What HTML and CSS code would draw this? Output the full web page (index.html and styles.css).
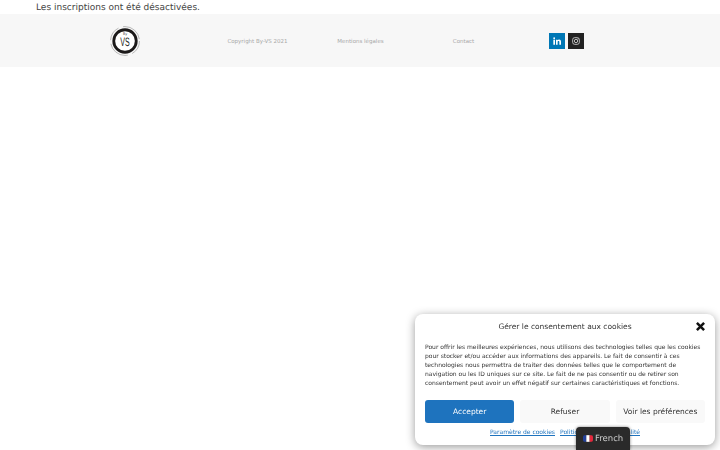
FILE: index.html
```html
<!DOCTYPE html>
<html lang="fr">
<head>
  <meta charset="UTF-8">
  <meta name="viewport" content="width=device-width, initial-scale=1.0">
  <title>By-VS</title>
  <link rel="stylesheet" href="styles.css">
</head>
<body>
  <p class="notice">Les inscriptions ont été désactivées.</p>

  <!-- Footer -->
  <footer class="footer">
    <div class="footer-logo">
      <svg width="30" height="30" viewBox="0 0 32 32">
        <circle cx="16" cy="16" r="15.4" fill="none" stroke="#8a8a8a" stroke-width="0.6" stroke-dasharray="16 5 24 4"/>
        <circle cx="16" cy="16" r="12" fill="#fff" stroke="#1c1a1a" stroke-width="3"/>
        <text class="logo-by" x="16" y="10" text-anchor="middle">By</text>
        <text class="logo-vs" x="16" y="21.5" text-anchor="middle" textLength="10" lengthAdjust="spacingAndGlyphs">VS</text>
      </svg>
    </div>
    <a class="footer-link" href="#">Copyright By-VS 2021</a>
    <a class="footer-link" href="#">Mentions légales</a>
    <a class="footer-link" href="#">Contact</a>
    <div class="social">
      <a class="social-btn linkedin" href="#">
        <svg width="8" height="8" viewBox="0 0 24 24" fill="#fff">
          <path d="M1 8h5v15H1zM3.500 1a2.700 2.700 0 1 1 0 5.400 2.700 2.700 0 0 1 0-5.400zM9 8h4.700v2.100c.8-1.400 2.400-2.500 4.700-2.500 4.400 0 5.600 2.800 5.600 7V23h-5v-7.400c0-2-.4-3.600-2.400-3.600-2.200 0-2.700 1.600-2.700 3.500V23H9z"/>
        </svg>
      </a>
      <a class="social-btn instagram" href="#">
        <svg width="8" height="8" viewBox="0 0 24 24" fill="none" stroke="#ddd" stroke-width="2.400">
          <rect x="2" y="2" width="20" height="20" rx="6"/>
          <circle cx="12" cy="12" r="5"/>
          <circle cx="18" cy="6" r="0.6"/>
        </svg>
      </a>
    </div>
  </footer>

  <!-- Cookie banner -->
  <div class="cookie-box">
    <div class="cookie-head">
      <span>Gérer le consentement aux cookies</span>
      <svg class="cookie-close" width="9" height="9" viewBox="0 0 10 10" stroke="#111" stroke-width="2.800">
        <path d="M1 1l8 8M9 1l-8 8"/>
      </svg>
    </div>
    <p class="cookie-text">Pour offrir les meilleures expériences, nous utilisons des technologies telles que les cookies pour stocker et/ou accéder aux informations des appareils. Le fait de consentir à ces technologies nous permettra de traiter des données telles que le comportement de navigation ou les ID uniques sur ce site. Le fait de ne pas consentir ou de retirer son consentement peut avoir un effet négatif sur certaines caractéristiques et fonctions.</p>
    <div class="cookie-btns">
      <button class="btn btn-accept">Accepter</button>
      <button class="btn">Refuser</button>
      <button class="btn">Voir les préférences</button>
    </div>
    <div class="cookie-links">
      <a href="#">Paramètre de cookies</a>
      <a href="#">Politique de confidentialité</a>
    </div>
  </div>

  <!-- Language switcher -->
  <div class="lang">
    <svg width="10" height="7" viewBox="0 0 3 2" class="flag">
      <rect width="1" height="2" fill="#23409a"/>
      <rect x="1" width="1" height="2" fill="#fff"/>
      <rect x="2" width="1" height="2" fill="#e3283c"/>
    </svg>
    <span>French</span>
  </div>
</body>
</html>
```

FILE: styles.css
```css
/* General styles */
html, body {
  height: 100%;
}

body {
  margin: 0;
  font-family: "DejaVu Sans", sans-serif;
  background-color: #fff;
  color: #444;
  overflow: hidden;
  text-rendering: geometricPrecision;
}

a {
  text-decoration: none;
}

/* Top message */
.notice {
  margin: 0;
  padding: 3px 0 0 36px;
  font-size: 9px;
  line-height: 11px;
  color: #444;
}

/* Footer */
.footer {
  display: grid;
  grid-template-columns: 170px repeat(3, 103px) 103px;
  align-items: center;
  justify-items: center;
  height: 53px;
  padding-left: 36px;
  background-color: #f7f7f7;
}

.footer-logo {
  display: flex;
  padding-left: 7px;
}

.logo-by {
  font-size: 3.500px;
  fill: #333;
}

.logo-vs {
  font-size: 13px;
  fill: #222;
  font-family: "Liberation Sans", sans-serif;
}

.footer-link {
  padding-top: 2px;
  font-size: 5.500px;
  color: #a8a8a8;
}

.social {
  display: flex;
  gap: 3px;
}

.social-btn {
  display: flex;
  align-items: center;
  justify-content: center;
  width: 16px;
  height: 16px;
}

.linkedin {
  background-color: #0077b5;
}

.instagram {
  background-color: #222;
}

/* Cookie banner */
.cookie-box {
  position: fixed;
  right: 5px;
  bottom: 5px;
  box-sizing: border-box;
  width: 300px;
  height: 131px;
  padding: 7px 10px 0;
  background-color: #fff;
  border-radius: 8px;
  box-shadow: 0 2px 10px rgba(0, 0, 0, 0.4);
}

.cookie-head {
  position: relative;
  height: 12px;
  text-align: center;
  font-size: 7.500px;
  line-height: 11px;
  color: #333;
}

.cookie-close {
  position: absolute;
  right: 0;
  top: 1px;
}

.cookie-text {
  margin: 10px 0 0;
  font-size: 6px;
  line-height: 9px;
  color: #333;
}

.cookie-btns {
  display: flex;
  gap: 6px;
  margin-top: 12px;
}

.btn {
  flex: 1;
  height: 23px;
  padding: 0;
  border: none;
  border-radius: 3px;
  background-color: #f9f9f9;
  color: #333;
  font-family: inherit;
  font-size: 7.500px;
}

.btn-accept {
  background-color: #1e73be;
  color: #fff;
}

.cookie-links {
  display: flex;
  justify-content: center;
  gap: 5px;
  margin-top: 6px;
  font-size: 6px;
}

.cookie-links a {
  color: #1e73be;
  text-decoration: underline;
}

/* Language switcher */
.lang {
  position: fixed;
  left: 576px;
  bottom: 0;
  display: flex;
  align-items: center;
  gap: 2px;
  box-sizing: border-box;
  width: 54px;
  height: 23px;
  padding-left: 7px;
  background-color: #2a2a2a;
  border-radius: 4px 4px 0 0;
  box-shadow: 0 0 3px rgba(0, 0, 0, 0.5);
  color: #ccc;
  font-size: 8.500px;
}

.flag {
  border-radius: 2px;
}
```
